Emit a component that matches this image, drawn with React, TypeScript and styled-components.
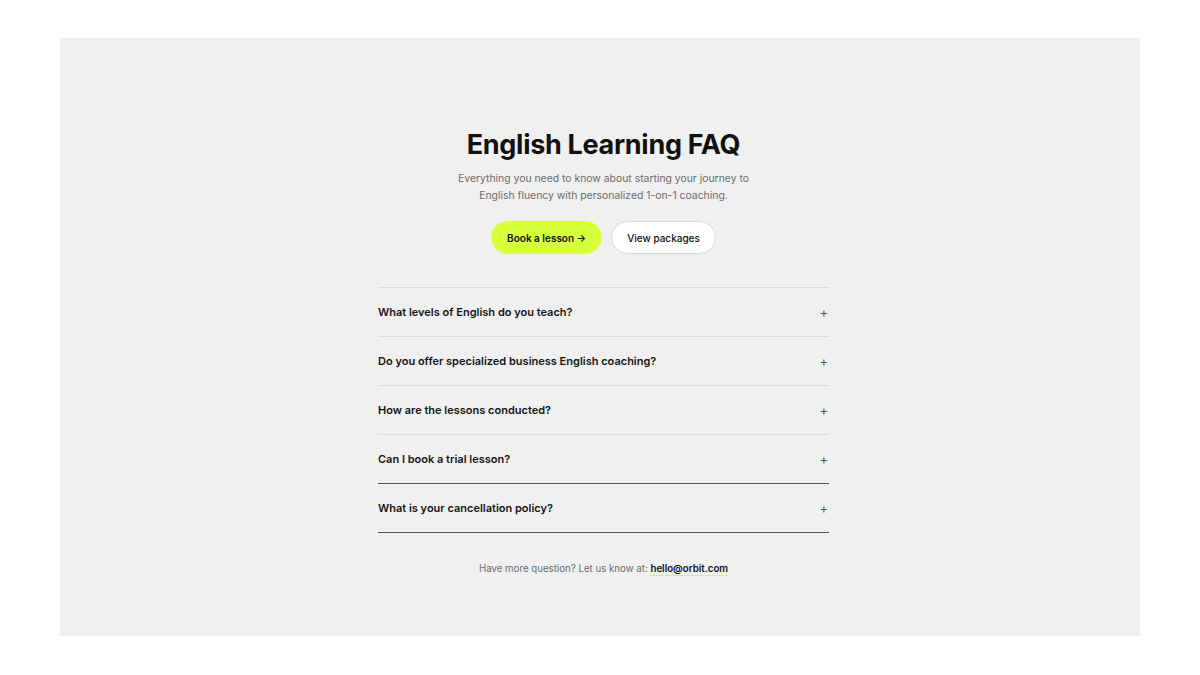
import styled, { createGlobalStyle } from "styled-components";

const GlobalStyle = createGlobalStyle`
  html, body {
    margin: 0;
    padding: 0;
    background: #ffffff;
    font-family: Inter, "Noto Sans", sans-serif;
  }
`;

const Page = styled.div`
  padding: 38px 60px 39px;
  box-sizing: border-box;
  height: 675px;
`;

const Panel = styled.section`
  background: #f0f0f0;
  height: 598px;
  display: flex;
  flex-direction: column;
  align-items: center;
  padding: 90px 0 0 7px;
  box-sizing: border-box;
`;

const Title = styled.h1`
  margin: 0;
  font-size: 27px;
  line-height: 34px;
  font-weight: 700;
  color: #111111;
  letter-spacing: -0.3px;
`;

const Lead = styled.p`
  margin: 8px 0 0;
  font-size: 10.4px;
  line-height: 17px;
  color: #6b6b6b;
  text-align: center;
`;

const Actions = styled.div`
  display: flex;
  gap: 9px;
  margin-top: 17px;
`;

const Button = styled.button<{ $primary?: boolean }>`
  height: 33px;
  padding: 0 15px;
  border-radius: 999px;
  font-family: inherit;
  font-size: 10px;
  font-weight: ${(p) => (p.$primary ? 600 : 500)};
  color: #111111;
  background: ${(p) => (p.$primary ? "#d6ff3c" : "#ffffff")};
  border: 1px solid ${(p) => (p.$primary ? "#d6ff3c" : "#d8d8d8")};
  cursor: pointer;
`;

const List = styled.div`
  width: 451px;
  margin-top: 33px;
  border-top: 1px solid #dcdcdc;
`;

const Item = styled.div<{ $active?: boolean }>`
  height: 48px;
  display: flex;
  align-items: center;
  justify-content: space-between;
  border-bottom: 1px solid ${(p) => (p.$active ? "#555555" : "#dcdcdc")};
`;

const Question = styled.span`
  font-size: 11px;
  font-weight: 600;
  color: #151515;
`;

const Plus = styled.span`
  font-size: 13px;
  color: #555555;
  margin-right: 1px;
  line-height: 1;
`;

const Footer = styled.p`
  margin: 30px 0 0;
  font-size: 9.7px;
  color: #6b6b6b;
`;

const Mail = styled.a`
  color: #111111;
  font-weight: 600;
  text-decoration: none;
  border-bottom: 1.5px solid #d6ff3c;
  padding-bottom: 1px;
`;

const questions = [
  "What levels of English do you teach?",
  "Do you offer specialized business English coaching?",
  "How are the lessons conducted?",
  "Can I book a trial lesson?",
  "What is your cancellation policy?",
];

export default function App() {
  return (
    <>
      <GlobalStyle />
      <Page>
        <Panel>
          <Title>English Learning FAQ</Title>
          <Lead>
            Everything you need to know about starting your journey to
            <br />
            English fluency with personalized 1-on-1 coaching.
          </Lead>
          <Actions>
            <Button $primary>Book a lesson →</Button>
            <Button>View packages</Button>
          </Actions>
          <List>
            {questions.map((q, i) => (
              <Item key={q} $active={i >= 3}>
                <Question>{q}</Question>
                <Plus>+</Plus>
              </Item>
            ))}
          </List>
          <Footer>
            Have more question? Let us know at: <Mail href="#">hello@orbit.com</Mail>
          </Footer>
        </Panel>
      </Page>
    </>
  );
}
